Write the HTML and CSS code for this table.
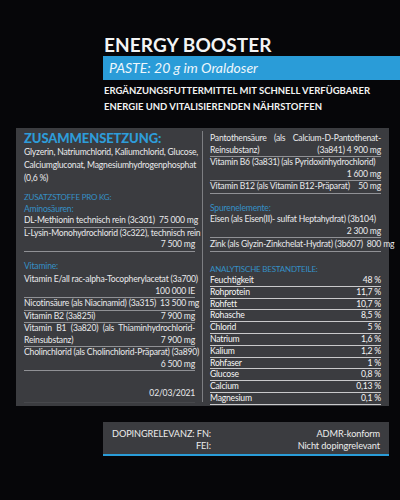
FILE: index.html
```html
<!DOCTYPE html>
<html lang="de">
<head>
    <meta charset="UTF-8">
    <meta name="viewport" content="width=device-width, initial-scale=1.0">
    <title>Energy Booster</title>
    <link rel="stylesheet" href="styles.css">
</head>
<body>
    <header class="head">
        <h1 class="title">ENERGY BOOSTER</h1>
        <div class="band">PASTE: 20 g im Oraldoser</div>
        <p class="claim">ERGÄNZUNGSFUTTERMITTEL MIT SCHNELL VERFÜGBARER<br>ENERGIE UND VITALISIERENDEN NÄHRSTOFFEN</p>
    </header>

    <section class="panel">
        <div class="col col-left">
            <h2 class="panel-title">ZUSAMMENSETZUNG:</h2>
            <p class="ingredients">Glyzerin, Natriumchlorid, Kaliumchlorid, Glucose,<br>Calciumgluconat, Magnesiumhydrogenphosphat<br>(0,6 %)</p>

            <div class="group-title first">ZUSATZSTOFFE PRO KG:</div>
            <div class="sub-title">Aminosäuren:</div>
            <div class="row"><span>DL-Methionin technisch rein (3c301)</span><span>75 000 mg</span></div>
            <div class="row multi">
                <div class="line">L-Lysin-Monohydrochlorid (3c322), technisch rein</div>
                <div class="line value">7 500 mg</div>
            </div>

            <div class="sub-title spaced vit">Vitamine:</div>
            <div class="row multi">
                <div class="line">Vitamin E/all rac-alpha-Tocopherylacetat (3a700)</div>
                <div class="line value">100 000 IE</div>
            </div>
            <div class="row"><span>Nicotinsäure (als Niacinamid) (3a315)</span><span>13 500 mg</span></div>
            <div class="row"><span>Vitamin B2 (3a825i)</span><span>7 900 mg</span></div>
            <div class="row multi">
                <div class="line justify">Vitamin B1 (3a820) (als Thiaminhydrochlorid-</div>
                <div class="line split"><span>Reinsubstanz)</span><span>7 900 mg</span></div>
            </div>
            <div class="row multi">
                <div class="line">Cholinchlorid (als Cholinchlorid-Präparat) (3a890)</div>
                <div class="line value">6 500 mg</div>
            </div>

            <div class="date">02/03/2021</div>
        </div>

        <div class="col col-right">
            <div class="row multi">
                <div class="line justify">Pantothensäure (als Calcium-D-Pantothenat-</div>
                <div class="line split"><span>Reinsubstanz)</span><span>(3a841) 4 900 mg</span></div>
            </div>
            <div class="row multi">
                <div class="line">Vitamin B6 (3a831) (als Pyridoxinhydrochlorid)</div>
                <div class="line value">1 600 mg</div>
            </div>
            <div class="row"><span>Vitamin B12 (als Vitamin B12-Präparat)</span><span>50 mg</span></div>

            <div class="sub-title spaced">Spurenelemente:</div>
            <div class="row multi">
                <div class="line">Eisen (als Eisen(II)- sulfat Heptahydrat) (3b104)</div>
                <div class="line value">2 300 mg</div>
            </div>
            <div class="row zink"><span>Zink (als Glyzin-Zinkchelat-Hydrat) (3b607)</span><span>800 mg</span></div>

            <div class="group-title spaced-lg">ANALYTISCHE BESTANDTEILE:</div>
            <div class="row analytic"><span>Feuchtigkeit</span><span>48 %</span></div>
            <div class="row analytic"><span>Rohprotein</span><span>11,7 %</span></div>
            <div class="row analytic"><span>Rohfett</span><span>10,7 %</span></div>
            <div class="row analytic"><span>Rohasche</span><span>8,5 %</span></div>
            <div class="row analytic"><span>Chlorid</span><span>5 %</span></div>
            <div class="row analytic"><span>Natrium</span><span>1,6 %</span></div>
            <div class="row analytic"><span>Kalium</span><span>1,2 %</span></div>
            <div class="row analytic"><span>Rohfaser</span><span>1 %</span></div>
            <div class="row analytic"><span>Glucose</span><span>0,8 %</span></div>
            <div class="row analytic"><span>Calcium</span><span>0,13 %</span></div>
            <div class="row analytic"><span>Magnesium</span><span>0,1 %</span></div>
        </div>
    </section>

    <section class="doping">
        <div class="doping-label">DOPINGRELEVANZ: FN:</div>
        <div class="doping-value">ADMR-konform</div>
        <div class="doping-label">FEI:</div>
        <div class="doping-value">Nicht dopingrelevant</div>
    </section>
</body>
</html>
```

FILE: styles.css
```css
body {
    margin: 0;
    background: #060609;
    color: #eaeaec;
    font-family: Lato, "Open Sans", sans-serif;
    width: 400px;
    height: 500px;
    overflow: hidden;
}

/* header */

.head {
    padding: 35px 0 0 103px;
}

.title {
    margin: 0 0 0 1px;
    font-size: 19px;
    line-height: 20px;
    font-weight: 700;
    color: #f4f4f4;
    letter-spacing: 0.1px;
}

.band {
    margin-top: 1px;
    height: 24px;
    line-height: 24px;
    padding-left: 6px;
    background: #2a9cd8;
    color: #eef7fc;
    font-size: 14px;
    font-style: italic;
}

.claim {
    margin: 3px 0 0 1px;
    font-size: 9.5px;
    line-height: 16px;
    font-weight: 700;
    color: #f2f2f2;
    white-space: nowrap;
}

/* composition panel */

.panel {
    display: flex;
    margin: 13px 11px 0 16px;
    padding: 0 8px;
    height: 278px;
    background: #3b3c40;
    font-size: 8.6px;
    letter-spacing: -0.2px;
}

.col {
    width: 171px;
    display: flex;
    flex-direction: column;
}

.col-left {
    padding-top: 2px;
}

.col-right {
    margin: 3px 0 4px 7px;
    padding: 2px 0 0 7px;
    border-left: 1px solid #7d7e82;
}

.panel-title {
    margin: 0;
    font-size: 13px;
    line-height: 16px;
    font-weight: 900;
    color: #2e9cd9;
    letter-spacing: -0.1px;
}

.ingredients {
    margin: 0;
    line-height: 13px;
    white-space: nowrap;
}

.group-title {
    line-height: 11.5px;
    color: #3590c6;
    font-size: 8px;
}

.group-title.first {
    margin-top: 7px;
}

.group-title.spaced-lg {
    margin-top: 12px;
}

.sub-title {
    line-height: 11.5px;
    color: #3590c6;
}

.sub-title.spaced {
    margin-top: 9px;
}

.sub-title.vit {
    margin-bottom: 2px;
}

.row {
    display: flex;
    justify-content: space-between;
    gap: 4px;
    line-height: 11.5px;
    border-bottom: 1px solid #909195;
    white-space: nowrap;
}

.row.multi {
    display: block;
}

.row.zink {
    margin-top: 1px;
}

.line.value {
    text-align: right;
}

.line.justify {
    text-align: justify;
    text-align-last: justify;
}

.line.split {
    display: flex;
    justify-content: space-between;
}

.row.analytic {
    line-height: 10.8px;
    border-bottom-color: #c9c9cb;
    color: #f6f6f6;
}

.date {
    margin-top: auto;
    margin-bottom: 3px;
    padding-bottom: 3px;
    text-align: right;
    line-height: 11px;
    border-bottom: 1px solid #47484c;
}

/* doping */

.doping {
    display: grid;
    grid-template-columns: auto 1fr;
    margin: 16px 11px 0 103px;
    padding: 6px 9px 2px 9px;
    background: #3b3c40;
    border-bottom: 2px solid #2a9cd8;
    font-size: 9.2px;
    line-height: 12px;
    letter-spacing: -0.1px;
    color: #ececec;
    white-space: nowrap;
}

.doping-label {
    text-align: right;
}

.doping-value {
    text-align: right;
}
```
